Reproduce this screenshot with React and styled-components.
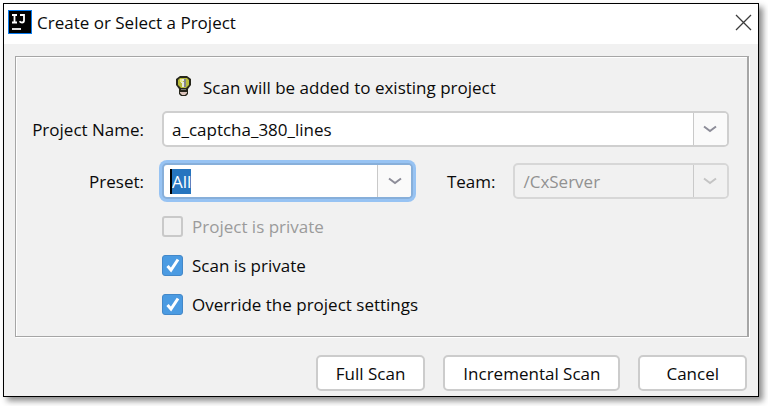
import styled, { createGlobalStyle } from "styled-components"
import { useEffect, useRef, useState } from "react"

const GlobalStyle = createGlobalStyle`
  * {
    box-sizing: border-box;
  }
  body {
    margin: 0;
    background: #ffffff;
    color: #0a0a0a;
    font-family: "Open Sans", "Noto Sans", sans-serif;
    font-size: 17px;
    line-height: 23px;
  }
  button, input, select {
    font: inherit;
    color: inherit;
  }
`
const Dialog = styled.main`
  margin: 3px 9px 9px 3px;
  border: 1px solid #000000;
  background: #f1f1f1;
  box-shadow: 4px 4px 6px rgba(0, 0, 0, 0.45);
`
const TitleBar = styled.header`
  display: flex;
  align-items: center;
  gap: 5px;
  height: 40px;
  padding: 0 6px 4px 4px;
  background: #ffffff;
`
const Title = styled.h1`
  flex: 1;
  margin: 0;
  font-size: 17px;
  font-weight: 400;
`
const CloseButton = styled.button`
  display: flex;
  padding: 0;
  border: none;
  background: none;
`
const Panel = styled.section`
  margin: 12px 9px 0 11px;
  padding: 19px 18px 20px 0;
  border: 1px solid #a6a6a6;
  border-right-width: 2px;
  box-shadow: 1px 1px 0 #ffffff, inset 1px 1px 0 #ffffff;
`
const Hint = styled.p`
  display: flex;
  align-items: flex-start;
  gap: 12px;
  margin: 0 0 12px;
  padding-left: 160px;
`
const Form = styled.div`
  display: grid;
  grid-template-columns: 128px 7fr 64px 6fr;
  column-gap: 18px;
  row-gap: 16px;
  align-items: center;
`
const FieldLabel = styled.label`
  text-align: right;
`
const Combo = styled.div`
  display: grid;
  grid-template-columns: 1fr 34px;
  grid-column: ${props => props.$wide ? "2 / -1" : "auto"};
  height: 36px;
  overflow: hidden;
  border: 2px solid ${props => props.$focused ? "#87afda" : props.$disabled ? "#d7d7d7" : "#cfcfcf"};
  border-radius: 5px;
  background: ${props => props.$disabled ? "#f1f1f1" : "#ffffff"};
  color: ${props => props.$disabled ? "#919191" : "inherit"};
  box-shadow: ${props => props.$focused ? "0 0 0 3px #97c3f3" : "none"};
`
const Select = styled.select`
  grid-area: 1 / 1 / 2 / 3;
  width: 100%;
  padding: 0 40px 0 8px;
  border: none;
  outline: none;
  appearance: none;
  background: transparent;

  &:disabled {
    opacity: 1;
  }
`
const ComboInput = styled.input`
  align-self: center;
  min-width: 0;
  height: 25px;
  margin-left: 6px;
  padding: 0;
  border: none;
  border-left: 2px solid #000000;
  outline: none;
  line-height: 25px;

  &::selection {
    background: #2675bf;
    color: #ffffff;
  }
`
const Arrow = styled.span`
  grid-area: 1 / 2 / 2 / 3;
  display: flex;
  align-items: center;
  justify-content: center;
  border-left: 1px solid #c9c9c9;
  background: ${props => props.$disabled ? "#f1f1f1" : "#fafafa"};
  color: ${props => props.$disabled ? "#c4c4c4" : "#8d8d99"};
  pointer-events: none;
`
const ArrowButton = styled(Arrow)`
  padding: 0;
  border-width: 0 0 0 1px;
  border-style: solid;
  border-color: #c9c9c9;
  pointer-events: auto;
`
const CheckRow = styled.label`
  display: flex;
  grid-column: 2 / -1;
  align-items: center;
  gap: 9px;
  color: ${props => props.$disabled ? "#9b9b9b" : "inherit"};
`
const CheckBox = styled.span`
  display: grid;
  width: 21px;
  height: 21px;

  input, svg {
    grid-area: 1 / 1;
  }
  input {
    width: 21px;
    height: 21px;
    margin: 0;
    border: 2px solid #c9c9c9;
    border-radius: 3px;
    appearance: none;
  }
  input:checked {
    border: 1px solid #4388c9;
    background: #4b9be2;
  }
  svg {
    pointer-events: none;
  }
`
const Footer = styled.footer`
  display: flex;
  justify-content: flex-end;
  gap: 18px;
  padding: 18px 11px 5px;
`
const Button = styled.button`
  height: 36px;
  padding: 0 18px;
  border: 2px solid #cccccc;
  border-radius: 5px;
  background: #ffffff;
`
const CancelButton = styled(Button)`
  padding: 0 26px;
`

function Logo() {
  return (
    <svg width="24" height="24" viewBox="0 0 24 24" aria-hidden="true">
      <rect width="24" height="24" fill="#087cf0" />
      <rect x="1" y="1" width="22" height="22" fill="#000" />
      <path
        d="M4 5h5M4 12.500h5M6.500 5v8M12 5h4v5.500c0 1.500-.8 2-2 2c-1 0-1.800-.4-2.400-1.200"
        fill="none"
        stroke="#fff"
        strokeWidth="1.800"
      />
      <rect x="4" y="18" width="9" height="2" fill="#ddd" />
    </svg>
  )
}

function Bulb() {
  return (
    <svg width="15" height="20" viewBox="0 0 15 20" aria-hidden="true">
      <path d="M4 0h7l4 3v6l-3 4v5l-2 2H5l-2-2v-5L0 9V3z" fill="#26261c" />
      <path d="M4 2h7l2 2v5l-3 3H5L2 9V4z" fill="#b9bc3b" />
      <path d="M4 3h3v3H4z" fill="#e9ec8c" />
      <path d="M6 3h3v2H6zM5 6h4v5H6V7H5z" fill="#e8e8dc" />
      <path d="M8 3h2v8H8z" fill="#84848c" />
      <path d="M5 13h5v1H5z" fill="#77776f" />
      <path d="M4 16h7v1l-2 2H6l-2-2z" fill="#dcc4bc" />
    </svg>
  )
}

function Chevron() {
  return (
    <svg width="14" height="8" viewBox="0 0 14 8" aria-hidden="true">
      <path d="M1 1.500l6 4.500l6-4.500" fill="none" stroke="currentColor" strokeWidth="2" />
    </svg>
  )
}

function Check({ label, checked, disabled, onChange }) {
  return (
    <CheckRow $disabled={disabled}>
      <CheckBox>
        <input type="checkbox" checked={checked} disabled={disabled} onChange={onChange} />
        {checked &&
          <svg width="21" height="21" viewBox="0 0 21 21" aria-hidden="true">
            <path d="M5.500 11l3.500 4l7-10.500" fill="none" stroke="#fff" strokeWidth="3" />
          </svg>
        }
      </CheckBox>
      {label}
    </CheckRow>
  )
}

function App() {
  const [scanPrivate, setScanPrivate] = useState(true)
  const [override, setOverride] = useState(true)
  const [preset, setPreset] = useState("All")
  const presetRef = useRef(null)

  useEffect(() => {
    presetRef.current.focus()
    presetRef.current.select()
  }, [])

  return (
    <>
      <GlobalStyle />
      <Dialog>
        <TitleBar>
          <Logo />
          <Title>Create or Select a Project</Title>
          <CloseButton aria-label="Close">
            <svg width="17" height="17" viewBox="0 0 17 17" aria-hidden="true">
              <path d="M1 1l15 15M16 1L1 16" stroke="#3c3c3c" strokeWidth="1.300" />
            </svg>
          </CloseButton>
        </TitleBar>
        <Panel>
          <Hint>
            <Bulb />
            Scan will be added to existing project
          </Hint>
          <Form>
            <FieldLabel htmlFor="project">Project Name:</FieldLabel>
            <Combo $wide>
              <Select id="project">
                <option>a_captcha_380_lines</option>
              </Select>
              <Arrow><Chevron /></Arrow>
            </Combo>
            <FieldLabel htmlFor="preset">Preset:</FieldLabel>
            <Combo $focused>
              <ComboInput
                id="preset"
                ref={presetRef}
                value={preset}
                onChange={(e) => setPreset(e.target.value)}
              />
              <ArrowButton as="button" aria-label="Show presets"><Chevron /></ArrowButton>
            </Combo>
            <FieldLabel htmlFor="team">Team:</FieldLabel>
            <Combo $disabled>
              <Select id="team" disabled>
                <option>/CxServer</option>
              </Select>
              <Arrow $disabled><Chevron /></Arrow>
            </Combo>
            <Check label="Project is private" checked={false} disabled />
            <Check
              label="Scan is private"
              checked={scanPrivate}
              onChange={() => setScanPrivate(!scanPrivate)}
            />
            <Check
              label="Override the project settings"
              checked={override}
              onChange={() => setOverride(!override)}
            />
          </Form>
        </Panel>
        <Footer>
          <Button>Full Scan</Button>
          <Button>Incremental Scan</Button>
          <CancelButton>Cancel</CancelButton>
        </Footer>
      </Dialog>
    </>
  )
}

export default App
